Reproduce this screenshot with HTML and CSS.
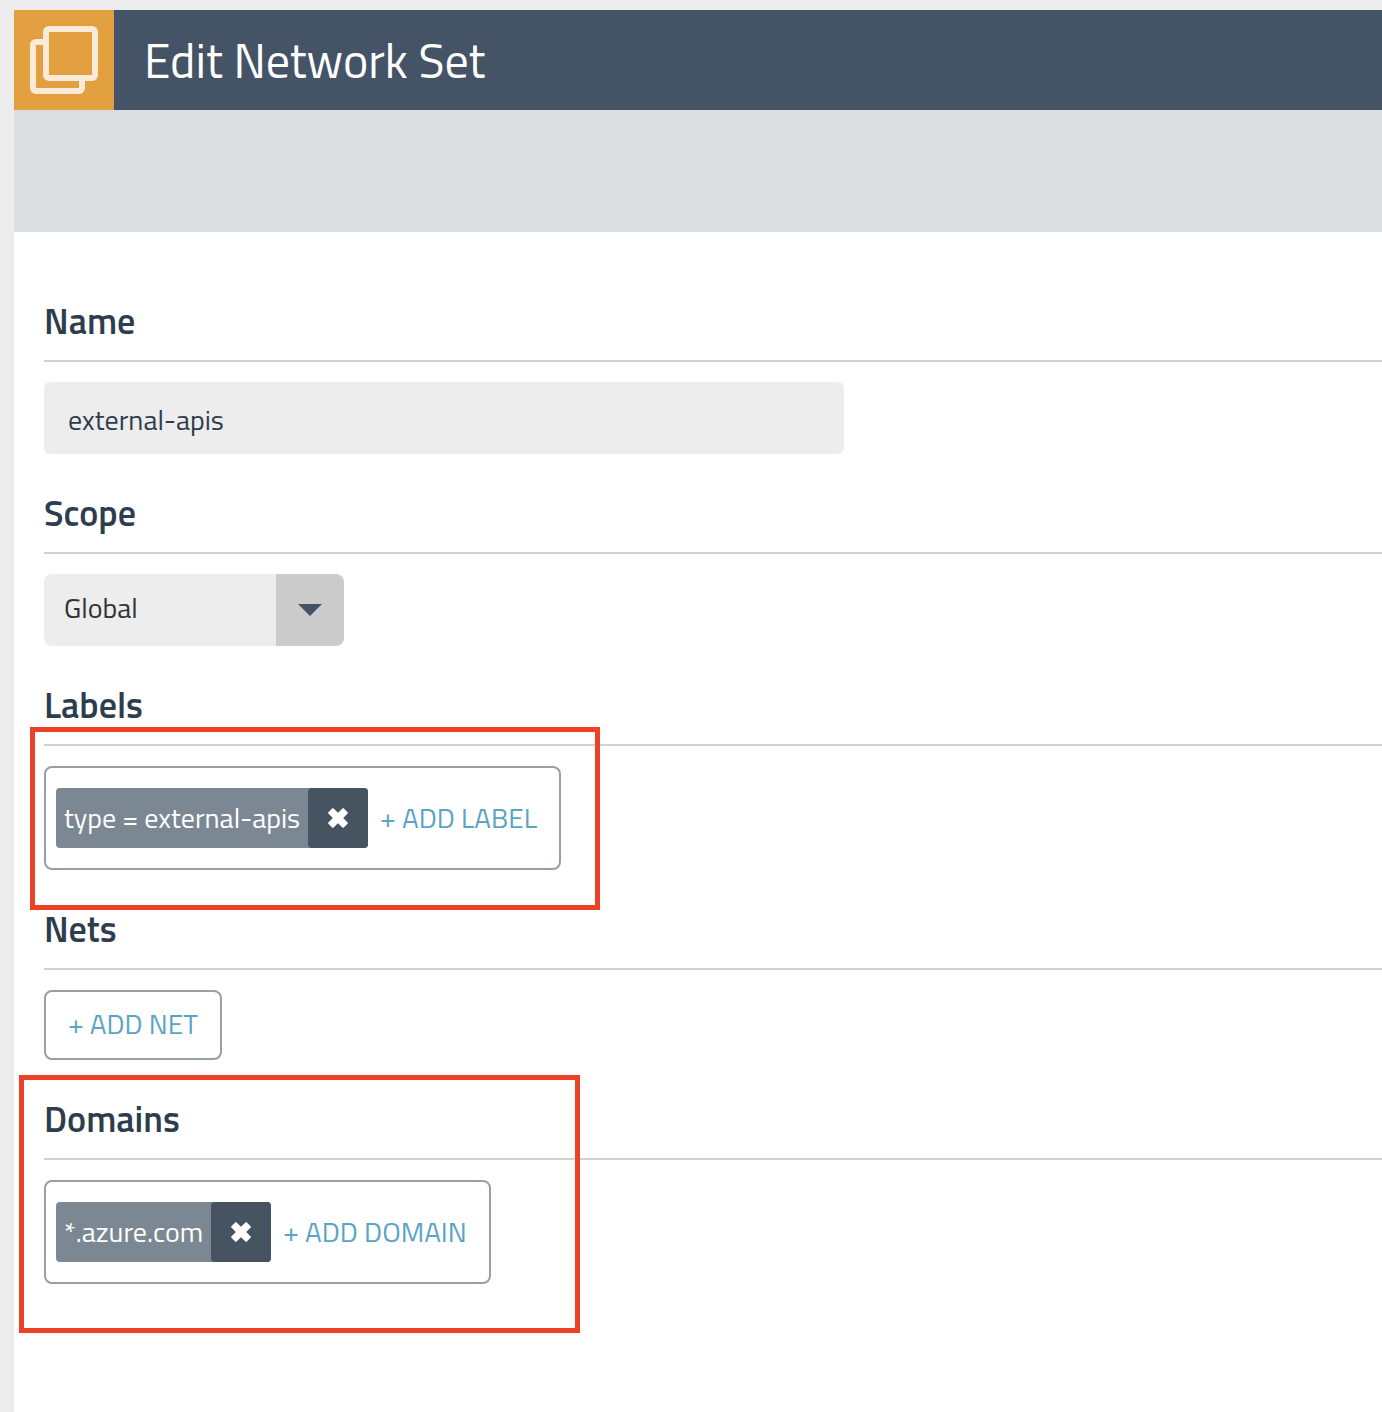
FILE: index.html
```html
<!DOCTYPE html>
<html lang="en">
<head>
<meta charset="utf-8">
<meta name="viewport" content="width=device-width, initial-scale=1">
<title>Edit Network Set</title>
<link rel="stylesheet" href="styles.css">
</head>
<body>
<div class="panel">
  <header class="header">
    <div class="header-icon">
      <svg width="100" height="100" viewBox="0 0 100 100" fill="none" stroke="#faebd9" stroke-width="6" aria-hidden="true">
        <rect x="32" y="19" width="49" height="49" rx="3"/>
        <path d="M29 32H22a3 3 0 0 0-3 3V78a3 3 0 0 0 3 3H65a3 3 0 0 0 3-3V71"/>
      </svg>
    </div>
    <h1 class="title">Edit Network Set</h1>
  </header>
  <div class="toolbar"></div>
  <form class="form">
    <section class="section">
      <h2 class="heading"><label for="name">Name</label></h2>
      <input class="text-input" id="name" type="text" value="external-apis">
    </section>
    <section class="section">
      <h2 class="heading"><label for="scope">Scope</label></h2>
      <div class="select">
        <select class="select-input" id="scope"><option>Global</option></select>
        <svg class="select-arrow" width="24" height="12" viewBox="0 0 24 12" aria-hidden="true"><path d="M0 0H24L12 12z" fill="#435365"/></svg>
      </div>
    </section>
    <section class="section">
      <h2 class="heading">Labels</h2>
      <div class="tag-box">
        <span class="tag">
          <span class="tag-text">type = external-apis</span>
          <button class="tag-remove" type="button" aria-label="Remove label">
            <svg width="20" height="20" viewBox="0 0 20 20" fill="#fff" stroke="#fff" stroke-width="2" stroke-linejoin="round" aria-hidden="true"><path d="M4.9 1.1L10 6.2L15.1 1.1L18.9 4.9L13.8 10L18.9 15.1L15.1 18.9L10 13.8L4.9 18.9L1.1 15.1L6.2 10L1.1 4.9Z"/></svg>
          </button>
        </span>
        <button class="add" type="button">+ ADD LABEL</button>
      </div>
      <div class="mark mark-labels"></div>
    </section>
    <section class="section">
      <h2 class="heading">Nets</h2>
      <button class="add add-outlined" type="button">+ ADD NET</button>
    </section>
    <section class="section">
      <h2 class="heading">Domains</h2>
      <div class="tag-box">
        <span class="tag">
          <span class="tag-text">*.azure.com</span>
          <button class="tag-remove" type="button" aria-label="Remove domain">
            <svg width="20" height="20" viewBox="0 0 20 20" fill="#fff" stroke="#fff" stroke-width="2" stroke-linejoin="round" aria-hidden="true"><path d="M4.9 1.1L10 6.2L15.1 1.1L18.9 4.9L13.8 10L18.9 15.1L15.1 18.9L10 13.8L4.9 18.9L1.1 15.1L6.2 10L1.1 4.9Z"/></svg>
          </button>
        </span>
        <button class="add" type="button">+ ADD DOMAIN</button>
      </div>
      <div class="mark mark-domains"></div>
    </section>
  </form>
</div>
</body>
</html>
```
FILE: styles.css
```css
* {
  box-sizing: border-box;
}

body {
  margin: 0;
  background: #ececec;
  color: #2e3d4d;
}

body,
input,
select,
button {
  font-family: "Titillium Web", Roboto, sans-serif;
  font-size: 28px;
  line-height: 40px;
}

.panel {
  display: flex;
  flex-direction: column;
  min-height: 100vh;
  padding: 10px 0 0 14px;
}

.header {
  display: flex;
  align-items: center;
  background: #445466;
}

.header-icon {
  display: flex;
  background: #e2a041;
}

.title {
  margin: 0;
  padding: 2px 0 0 30px;
  color: #fff;
  font-size: 48px;
  font-weight: 400;
  line-height: 72px;
}

.toolbar {
  height: 122px;
  background: #dadee1;
}

.form {
  display: flex;
  flex: 1;
  flex-direction: column;
  gap: 36px;
  padding: 66px 0 66px 30px;
  background: #fff;
}

.section {
  position: relative;
  display: flex;
  flex-direction: column;
  align-items: flex-start;
}

.heading {
  align-self: stretch;
  margin: 0 0 20px;
  padding-bottom: 16px;
  border-bottom: 2px solid #d0d0d0;
  font-size: 36px;
  font-weight: 600;
  line-height: 46px;
}

.text-input {
  width: 100%;
  max-width: 800px;
  height: 72px;
  padding: 2px 24px 0;
  border: 0;
  border-radius: 6px;
  background: #ededed;
  color: #2e3d4d;
}

.select {
  display: grid;
  grid-template-columns: 1fr 68px;
  align-items: center;
  width: 300px;
  overflow: hidden;
  border-radius: 8px;
  background: linear-gradient(to left, #cbcbcb 68px, #ededed 68px);
}

.select-input {
  grid-area: 1 / 1 / 2 / 3;
  height: 72px;
  padding: 0 88px 4px 20px;
  border: 0;
  appearance: none;
  background: transparent;
  color: #333;
}

.select-arrow {
  grid-area: 1 / 2;
  justify-self: center;
  pointer-events: none;
}

.tag-box {
  display: flex;
  align-items: center;
  padding: 20px 10px;
  border: 2px solid #97a0aa;
  border-radius: 8px;
}

.tag {
  display: flex;
  border-radius: 4px;
  background: #7b8793;
  color: #fff;
}

.tag-text {
  padding: 0 8px;
  line-height: 60px;
}

.tag-remove {
  display: flex;
  align-items: center;
  justify-content: center;
  width: 60px;
  height: 60px;
  padding: 0;
  border: 0;
  border-radius: 4px;
  background: #465361;
}

.add {
  padding: 0 12px;
  border: 0;
  background: none;
  color: #5aa5c4;
}

.add-outlined {
  height: 70px;
  padding: 0 22px 2px;
  border: 2px solid #97a0aa;
  border-radius: 8px;
}

/* Highlight frames laid over the form */
.mark {
  position: absolute;
  border: 5px solid #eb4127;
  pointer-events: none;
}

.mark-labels {
  top: 45px;
  left: -14px;
  width: 570px;
  height: 183px;
}

.mark-domains {
  top: -21px;
  left: -25px;
  width: 561px;
  height: 258px;
}
```
